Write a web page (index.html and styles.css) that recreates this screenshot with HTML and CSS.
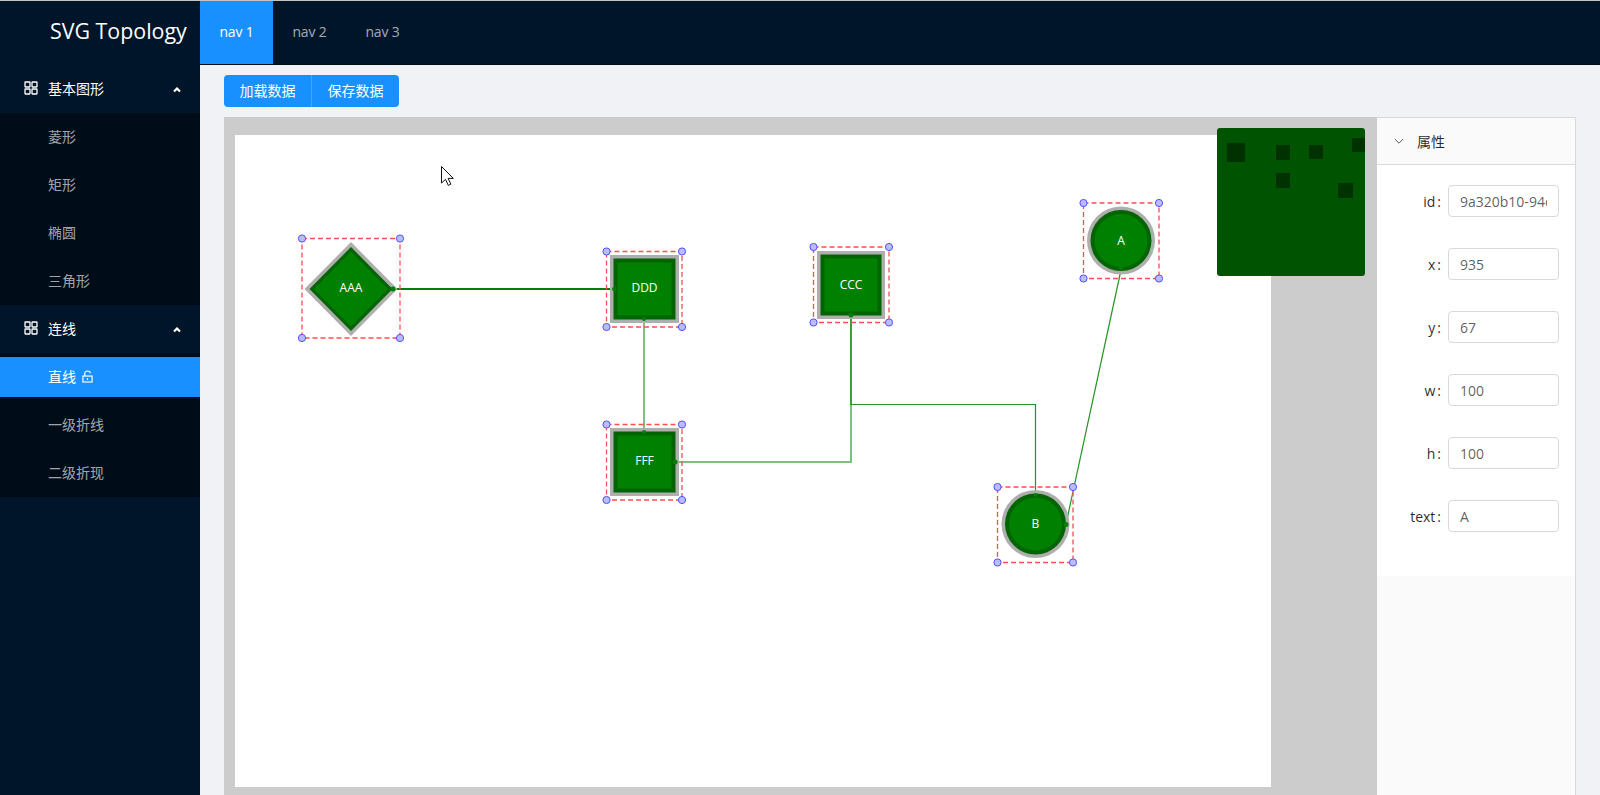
FILE: index.html
```html
<!DOCTYPE html>
<html lang="en">
<head>
    <meta charset="UTF-8">
    <meta name="viewport" content="width=device-width, initial-scale=1.0">
    <title>SVG Topology</title>
    <link rel="stylesheet" href="styles.css">
</head>
<body>

<header class="header">
    <div class="logo">SVG Topology</div>
    <nav class="topnav">
        <a class="topnav-item active">nav 1</a>
        <a class="topnav-item">nav 2</a>
        <a class="topnav-item">nav 3</a>
    </nav>
</header>

<div class="page">
    <aside class="sider">
        <div class="group-title">
            <svg class="icon-grid" viewBox="0 0 14 14"><rect x="1" y="1" width="5" height="5" rx="0.5"/><rect x="8" y="1" width="5" height="5" rx="0.5"/><rect x="1" y="8" width="5" height="5" rx="0.5"/><rect x="8" y="8" width="5" height="5" rx="0.5"/></svg>
            <span>基本图形</span>
            <svg class="icon-up" viewBox="0 0 10 10"><path d="M2 6.5L5 3.5l3 3"/></svg>
        </div>
        <ul class="submenu">
            <li class="menu-item">菱形</li>
            <li class="menu-item">矩形</li>
            <li class="menu-item">椭圆</li>
            <li class="menu-item">三角形</li>
        </ul>
        <div class="group-title">
            <svg class="icon-grid" viewBox="0 0 14 14"><rect x="1" y="1" width="5" height="5" rx="0.5"/><rect x="8" y="1" width="5" height="5" rx="0.5"/><rect x="1" y="8" width="5" height="5" rx="0.5"/><rect x="8" y="8" width="5" height="5" rx="0.5"/></svg>
            <span>连线</span>
            <svg class="icon-up" viewBox="0 0 10 10"><path d="M2 6.5L5 3.5l3 3"/></svg>
        </div>
        <ul class="submenu">
            <li class="menu-item selected">直线
                <svg class="icon-lock" viewBox="0 0 12 14"><path d="M3 6.5V3.6C3 2 4.2 1 6 1s3 1 3 2.4"/><rect x="1" y="6.5" width="10" height="6.5"/><path d="M6 8.8v2"/></svg>
            </li>
            <li class="menu-item">一级折线</li>
            <li class="menu-item">二级折现</li>
        </ul>
    </aside>

    <main class="content">
        <div class="toolbar">
            <button class="btn" type="button">加载数据</button>
            <button class="btn" type="button">保存数据</button>
        </div>

        <div class="workspace">
            <div class="canvas-wrap">
                <div class="canvas">
                    <svg class="topology" viewBox="235 135 1036 652">
                        <!-- lines, page coordinates -->
                        <g class="links">
                            <path class="link strong" d="M393 289H614"/>
                            <path class="link soft" d="M644 318V432"/>
                            <path class="link soft" d="M675 462H851V316"/>
                            <path class="link" d="M851 316V404.5H1035.5V495"/>
                            <path class="link" d="M1121 270L1066 524"/>
                        </g>

                        <!-- AAA -->
                        <polygon class="halo" points="351,242 397.5,289 351,336 304.5,289"/>
                        <polygon class="edge" points="351,247 392.5,289 351,331 309.5,289"/>
                        <polygon class="fill" points="351,251.5 388,289 351,326.5 314,289"/>
                        <rect class="sel" x="302" y="238.5" width="98" height="99.5"/>
                        <text class="label" x="351" y="292">AAA</text>

                        <!-- DDD -->
                        <rect class="halo" x="610" y="255" width="69" height="68"/>
                        <rect class="edge" x="613.5" y="258.5" width="62" height="61"/>
                        <rect class="fill" x="617.5" y="262.5" width="54" height="53"/>
                        <rect class="sel" x="606.5" y="251.5" width="75.5" height="75.5"/>
                        <text class="label" x="644.5" y="292">DDD</text>

                        <!-- FFF -->
                        <rect class="halo" x="610" y="428" width="69" height="68"/>
                        <rect class="edge" x="613.5" y="431.5" width="62" height="61"/>
                        <rect class="fill" x="617.5" y="435.5" width="54" height="53"/>
                        <rect class="sel" x="606.5" y="424.5" width="75.5" height="75.5"/>
                        <text class="label" x="644.5" y="465">FFF</text>

                        <!-- CCC -->
                        <rect class="halo" x="817" y="251" width="68" height="68"/>
                        <rect class="edge" x="820.5" y="254.5" width="61" height="61"/>
                        <rect class="fill" x="824.5" y="258.5" width="53" height="53"/>
                        <rect class="sel" x="813.5" y="247" width="75.5" height="75.5"/>
                        <text class="label" x="851" y="288.5">CCC</text>

                        <!-- A -->
                        <circle class="halo" cx="1121" cy="240.5" r="34"/>
                        <circle class="edge" cx="1121" cy="240.5" r="30.5"/>
                        <circle class="fill" cx="1121" cy="240.5" r="26.5"/>
                        <rect class="sel" x="1083.5" y="203" width="75.5" height="75.5"/>
                        <text class="label" x="1121" y="244.5">A</text>

                        <!-- B -->
                        <circle class="halo" cx="1035.5" cy="524" r="34"/>
                        <circle class="edge" cx="1035.5" cy="524" r="30.5"/>
                        <circle class="fill" cx="1035.5" cy="524" r="26.5"/>
                        <rect class="sel" x="997.5" y="487" width="75.5" height="75.5"/>
                        <text class="label" x="1035.5" y="528">B</text>

                        <!-- link end points -->
                        <g class="dots">
                            <circle cx="393" cy="289" r="2.5"/>
                            <circle cx="614" cy="289" r="2"/>
                            <circle cx="644" cy="319" r="2"/>
                            <circle cx="644" cy="432" r="2"/>
                            <circle cx="675" cy="462" r="2.5"/>
                            <circle cx="851" cy="315" r="2.5"/>
                            <circle cx="1035.5" cy="495" r="2"/>
                            <circle cx="1121" cy="268" r="2"/>
                            <circle cx="1066" cy="524.5" r="2.5"/>
                        </g>

                        <!-- corner handles -->
                        <g class="handles">
                            <circle cx="302" cy="238.5" r="3.6"/><circle cx="400" cy="238.5" r="3.6"/><circle cx="302" cy="338" r="3.6"/><circle cx="400" cy="338" r="3.6"/>
                            <circle cx="606.5" cy="251.5" r="3.6"/><circle cx="682" cy="251.5" r="3.6"/><circle cx="606.5" cy="327" r="3.6"/><circle cx="682" cy="327" r="3.6"/>
                            <circle cx="606.5" cy="424.5" r="3.6"/><circle cx="682" cy="424.5" r="3.6"/><circle cx="606.5" cy="500" r="3.6"/><circle cx="682" cy="500" r="3.6"/>
                            <circle cx="813.5" cy="247" r="3.6"/><circle cx="889" cy="247" r="3.6"/><circle cx="813.5" cy="322.5" r="3.6"/><circle cx="889" cy="322.5" r="3.6"/>
                            <circle cx="1083.5" cy="203" r="3.6"/><circle cx="1159" cy="203" r="3.6"/><circle cx="1083.5" cy="278.5" r="3.6"/><circle cx="1159" cy="278.5" r="3.6"/>
                            <circle cx="997.5" cy="487" r="3.6"/><circle cx="1073" cy="487" r="3.6"/><circle cx="997.5" cy="562.5" r="3.6"/><circle cx="1073" cy="562.5" r="3.6"/>
                        </g>

                        <!-- mouse pointer -->
                        <path class="pointer" d="M441.5 166.5V183l4-3.6 2.8 6 2.6-1.2-2.8-5.8h5.2z"/>
                    </svg>
                </div>

                <svg class="minimap" viewBox="0 0 148 148">
                    <rect x="10" y="15" width="18" height="19"/>
                    <rect x="59" y="17" width="14" height="15"/>
                    <rect x="92" y="17" width="14" height="14"/>
                    <rect x="135" y="10" width="13" height="14"/>
                    <rect x="59" y="45" width="14" height="15"/>
                    <rect x="121" y="55" width="15" height="15"/>
                </svg>
            </div>

            <section class="props">
                <div class="props-head">
                    <svg class="icon-down" viewBox="0 0 10 10"><path d="M0.8 3L5 7.2 9.2 3"/></svg>
                    <span>属性</span>
                </div>
                <form class="props-form">
                    <div class="field"><label for="f-id">id</label><input id="f-id" type="text" value="9a320b10-94c6-11e9"></div>
                    <div class="field"><label for="f-x">x</label><input id="f-x" type="text" value="935"></div>
                    <div class="field"><label for="f-y">y</label><input id="f-y" type="text" value="67"></div>
                    <div class="field"><label for="f-w">w</label><input id="f-w" type="text" value="100"></div>
                    <div class="field"><label for="f-h">h</label><input id="f-h" type="text" value="100"></div>
                    <div class="field"><label for="f-text">text</label><input id="f-text" type="text" value="A"></div>
                </form>
            </section>
        </div>
    </main>
</div>

</body>
</html>
```

FILE: styles.css
```css
* {
    box-sizing: border-box;
}

html,
body {
    height: 100%;
    margin: 0;
    overflow: hidden;
}

body {
    display: flex;
    flex-direction: column;
    background-color: #f0f2f5;
    border-top: 1px solid #c4c4c4;
    font-family: "Open Sans", "Noto Sans CJK SC", sans-serif;
    font-size: 14px;
    color: rgba(0, 0, 0, 0.65);
}

/* header */
.header {
    display: flex;
    flex: none;
    height: 64px;
    background-color: #001529;
}

.logo {
    width: 200px;
    padding-left: 50px;
    line-height: 60px;
    font-size: 21.4px;
    color: #fff;
    white-space: nowrap;
}

.topnav {
    display: flex;
    flex: 1;
    border-bottom: 1px solid #000c17;
}

.topnav-item {
    width: 73px;
    line-height: 61px;
    text-align: center;
    letter-spacing: -0.2px;
    color: rgba(255, 255, 255, 0.65);
}

.topnav-item.active {
    background-color: #1890ff;
    color: #fff;
}

.page {
    display: flex;
    flex: 1;
    min-height: 0;
}

/* left menu */
.sider {
    flex: none;
    width: 200px;
    background-color: #001529;
    color: rgba(255, 255, 255, 0.65);
}

.group-title {
    display: flex;
    align-items: center;
    height: 48px;
    padding: 0 18px 2px 24px;
    color: #fff;
}

.group-title span {
    flex: 1;
}

.icon-grid {
    width: 14px;
    height: 14px;
    margin-right: 10px;
    fill: none;
    stroke: #fff;
    stroke-width: 1.3;
}

.icon-up {
    width: 10px;
    height: 10px;
    margin-top: 3px;
    fill: none;
    stroke: #fff;
    stroke-width: 2.2;
}

.submenu {
    margin: 0;
    padding: 4px 0;
    list-style: none;
    background-color: #000c17;
}

.menu-item {
    display: flex;
    align-items: center;
    height: 40px;
    margin-bottom: 8px;
    padding: 0 0 2px 48px;
}

.menu-item:last-child {
    margin-bottom: 0;
}

.menu-item.selected {
    background-color: #1890ff;
    color: #fff;
}

.icon-lock {
    width: 11px;
    height: 13px;
    margin-left: 6px;
    fill: none;
    stroke: #fff;
    stroke-width: 1.3;
}

/* main area */
.content {
    display: flex;
    flex: 1;
    flex-direction: column;
    min-width: 0;
    padding: 10px 24px 0;
}

.toolbar {
    display: flex;
    flex: none;
    margin-bottom: 10px;
}

.btn {
    width: 87px;
    height: 32px;
    padding: 0 0 2px;
    border: none;
    background-color: #1890ff;
    color: #fff;
    font-family: inherit;
    font-size: 14px;
    cursor: pointer;
}

.btn:first-child {
    width: 88px;
    border-right: 1px solid #40a9ff;
    border-radius: 4px 0 0 4px;
}

.btn:last-child {
    border-radius: 0 4px 4px 0;
}

.workspace {
    display: flex;
    flex: 1;
    min-height: 0;
}

.canvas-wrap {
    position: relative;
    flex: 1;
    padding: 18px 0 0 11px;
    background-color: #cccccc;
    overflow: hidden;
}

.canvas {
    width: 1036px;
    height: 652px;
    background-color: #fff;
}

.topology {
    display: block;
    width: 100%;
    height: 100%;
}

.link {
    fill: none;
    stroke: #008000;
    stroke-width: 1.2;
    opacity: 0.85;
}

.link.strong {
    stroke-width: 2;
    opacity: 1;
}

.link.soft {
    stroke-width: 2;
    opacity: 0.5;
}

.halo {
    fill: #aeaeae;
}

.edge {
    fill: #006400;
}

.fill {
    fill: #008000;
}

.sel {
    fill: none;
    stroke: #ff4d55;
    stroke-width: 1.3;
    stroke-dasharray: 5 3;
}

.label {
    fill: #fff;
    font-size: 12px;
    text-anchor: middle;
}

.dots {
    fill: #008000;
}

.handles {
    fill: #bbbbff;
    stroke: #5050ff;
    stroke-width: 1;
}

.pointer {
    fill: #fff;
    stroke: #111;
    stroke-width: 1;
}

/* overlay, sits on the canvas */
.minimap {
    position: absolute;
    top: 11px;
    left: 993px;
    width: 148px;
    height: 148px;
    border-radius: 3px;
    background-color: #005300;
    fill: #003200;
}

/* properties */
.props {
    display: flex;
    flex: none;
    flex-direction: column;
    width: 199px;
    border-top: 1px solid #d9d9d9;
    border-right: 1px solid #d9d9d9;
    background-color: #fafafa;
}

.props-head {
    display: flex;
    align-items: center;
    flex: none;
    height: 47px;
    padding-left: 17px;
    border-bottom: 1px solid #d9d9d9;
    color: rgba(0, 0, 0, 0.85);
}

.icon-down {
    width: 10px;
    height: 10px;
    margin-right: 13px;
    fill: none;
    stroke: rgba(0, 0, 0, 0.65);
    stroke-width: 1;
}

.props-form {
    height: 411px;
    padding: 20px 16px 0 0;
    background-color: #fff;
}

.field {
    display: flex;
    align-items: center;
    justify-content: flex-end;
    height: 32px;
    margin-bottom: 31px;
}

.field label {
    margin-right: 7px;
    color: rgba(0, 0, 0, 0.85);
}

.field label::after {
    content: ":";
    margin-left: 2px;
}

.field input {
    width: 111px;
    height: 32px;
    padding: 4px 11px;
    border: 1px solid #d9d9d9;
    border-radius: 4px;
    background-color: #fff;
    color: rgba(0, 0, 0, 0.65);
    font-family: inherit;
    font-size: 14px;
}
```
